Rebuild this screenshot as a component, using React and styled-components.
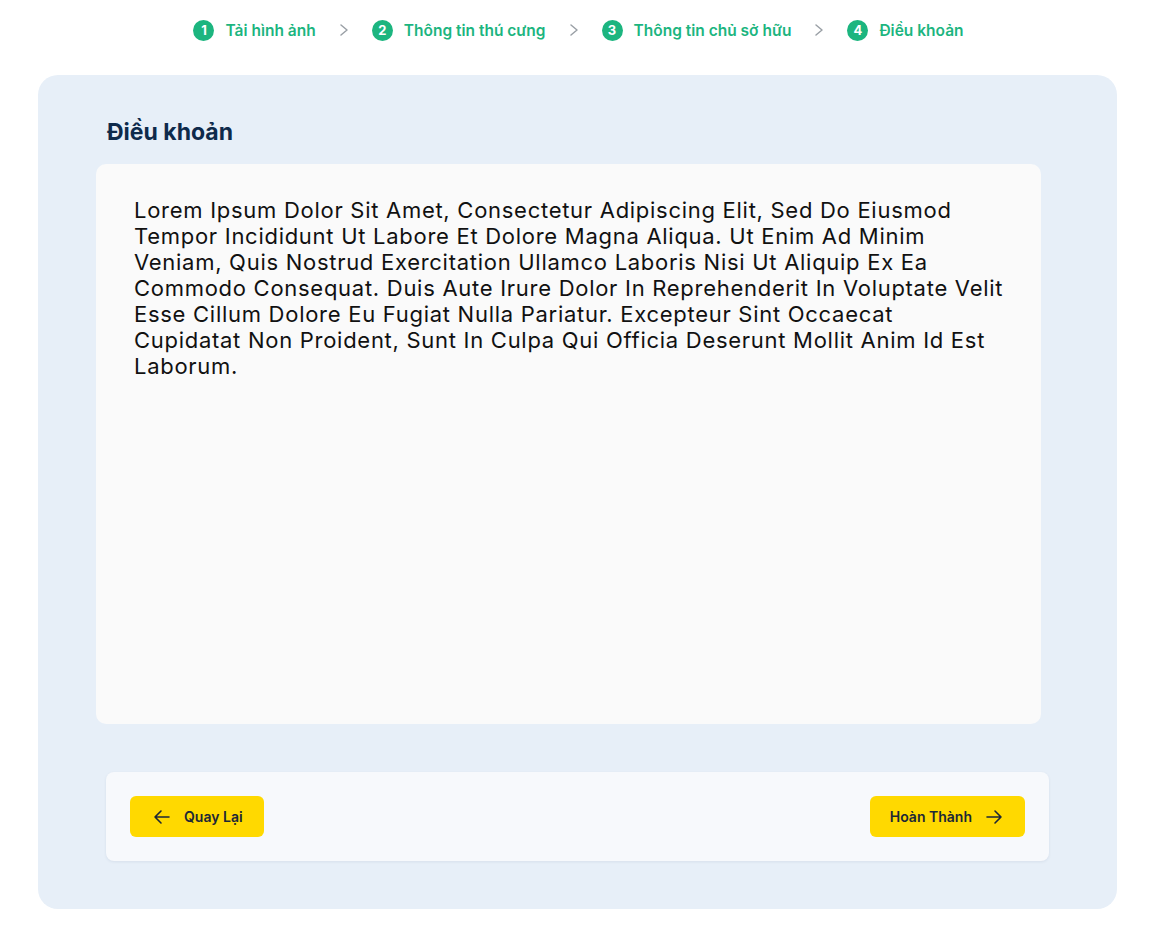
import React from 'react';
import styled, { createGlobalStyle } from 'styled-components';

const GlobalStyle = createGlobalStyle`
  body {
    margin: 0;
    background: #ffffff;
    font-family: Inter, "Noto Sans", "Liberation Sans", sans-serif;
  }
`;

const Page = styled.div`
  width: 1152px;
  padding: 18px 35px 21px 38px;
  box-sizing: border-box;
`;

const Stepper = styled.div`
  display: flex;
  justify-content: center;
  align-items: center;
  height: 24px;
  padding-left: 2px;
  margin-bottom: 33px;
`;

const Step = styled.div`
  display: flex;
  align-items: center;
  gap: 11px;
  color: #1cb57f;
  font-size: 15.5px;
  font-weight: 600;
`;

const StepNumber = styled.span`
  width: 21px;
  height: 21px;
  border-radius: 50%;
  background: #1cb57f;
  color: #ffffff;
  font-size: 13px;
  font-weight: 700;
  display: flex;
  align-items: center;
  justify-content: center;
`;

const Chevron = styled.span`
  display: flex;
  margin: 0 22px;
  color: #9aa0a6;
`;

const Card = styled.div`
  background: #e7eff8;
  border-radius: 20px;
  height: 834px;
  padding: 42px 76px 48px 58px;
  box-sizing: border-box;
  display: flex;
  flex-direction: column;
`;

const Title = styled.h2`
  margin: 0 0 17px 11px;
  font-size: 23px;
  font-weight: 700;
  color: #0e2a4b;
  line-height: 30px;
`;

const TermsBox = styled.div`
  background: #fafafa;
  border-radius: 10px;
  height: 560px;
  padding: 33px 35px 30px 38px;
  box-sizing: border-box;
`;

const TermsText = styled.p`
  margin: 0;
  font-size: 22px;
  line-height: 26px;
  letter-spacing: 0.72px;
  color: #111111;
  font-weight: 400;
`;

const Footer = styled.div`
  margin: 48px -8px 0 10px;
  background: #f7f9fc;
  border-radius: 8px;
  box-shadow: 0 1px 3px rgba(30, 50, 90, 0.08);
  height: 89px;
  padding: 0 24px;
  display: flex;
  align-items: center;
  justify-content: space-between;
`;

const Button = styled.button`
  height: 41px;
  padding: ${p => (p.$reverse ? '0 22px 0 20px' : '0 21px 0 23px')};
  border: none;
  border-radius: 6px;
  background: #ffd900;
  color: #1c2736;
  font-family: inherit;
  font-size: 14px;
  font-weight: 600;
  display: flex;
  align-items: center;
  gap: 13px;
  cursor: pointer;
`;

const ChevronIcon = () => (
  <svg width="12" height="16" viewBox="0 0 12 16" fill="none">
    <path d="M3 3l6 5-6 5" stroke="currentColor" strokeWidth="1.5" strokeLinecap="round" strokeLinejoin="round" />
  </svg>
);

const ArrowIcon = ({ dir }) => (
  <svg width="18" height="18" viewBox="0 0 18 18" fill="none" style={dir === 'left' ? { transform: 'scaleX(-1)' } : null}>
    <path d="M2 9h14M10 3l6 6-6 6" stroke="currentColor" strokeWidth="1.6" strokeLinecap="round" strokeLinejoin="round" />
  </svg>
);

const steps = ['Tải hình ảnh', 'Thông tin thú cưng', 'Thông tin chủ sở hữu', 'Điều khoản'];

const lorem =
  'Lorem Ipsum Dolor Sit Amet, Consectetur Adipiscing Elit, Sed Do Eiusmod Tempor Incididunt Ut Labore Et Dolore Magna Aliqua. Ut Enim Ad Minim Veniam, Quis Nostrud Exercitation Ullamco Laboris Nisi Ut Aliquip Ex Ea Commodo Consequat. Duis Aute Irure Dolor In Reprehenderit In Voluptate Velit Esse Cillum Dolore Eu Fugiat Nulla Pariatur. Excepteur Sint Occaecat Cupidatat Non Proident, Sunt In Culpa Qui Officia Deserunt Mollit Anim Id Est Laborum.';

export default function App() {
  return (
    <>
      <GlobalStyle />
      <Page>
        <Stepper>
          {steps.map((label, i) => (
            <React.Fragment key={label}>
              {i > 0 && (
                <Chevron>
                  <ChevronIcon />
                </Chevron>
              )}
              <Step>
                <StepNumber>{i + 1}</StepNumber>
                {label}
              </Step>
            </React.Fragment>
          ))}
        </Stepper>
        <Card>
          <Title>Điều khoản</Title>
          <TermsBox>
            <TermsText>{lorem}</TermsText>
          </TermsBox>
          <Footer>
            <Button>
              <ArrowIcon dir="left" />
              Quay Lại
            </Button>
            <Button $reverse>
              Hoàn Thành
              <ArrowIcon />
            </Button>
          </Footer>
        </Card>
      </Page>
    </>
  );
}
